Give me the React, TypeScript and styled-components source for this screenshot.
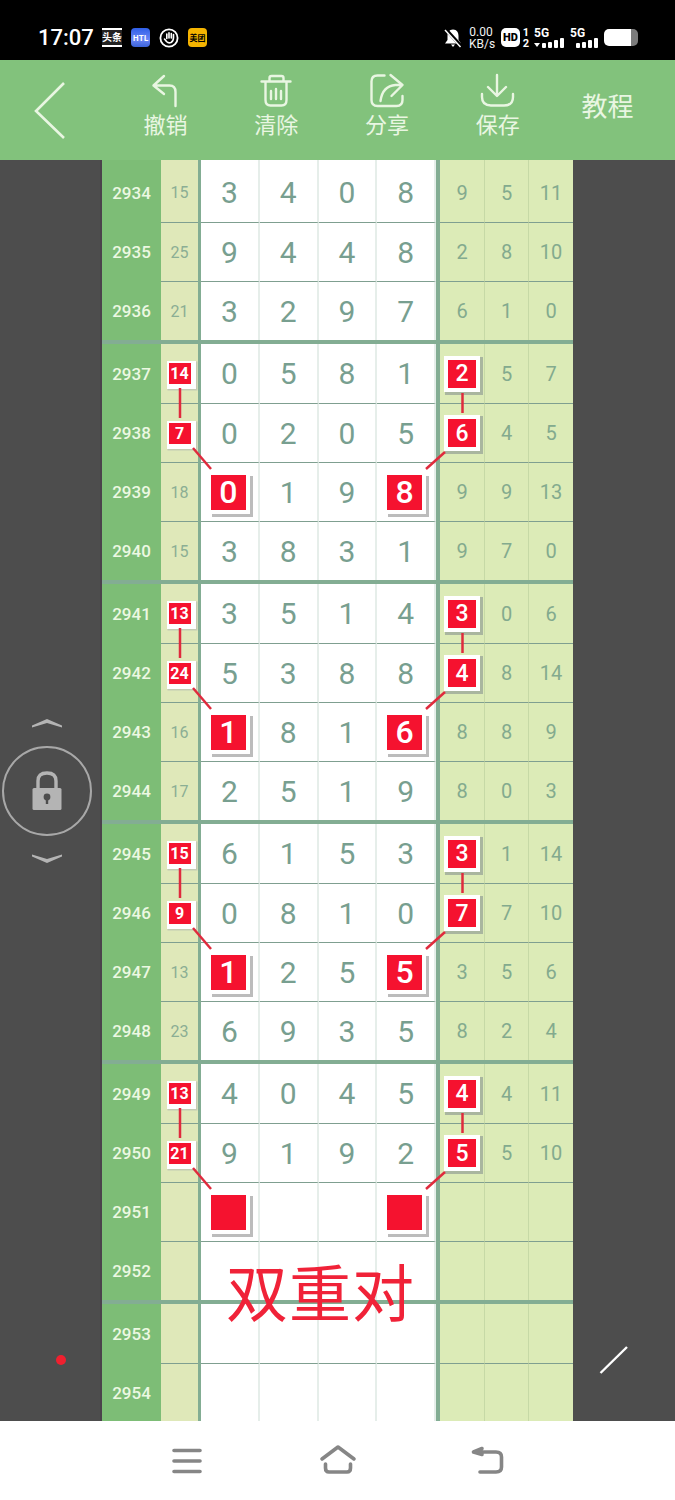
import React from 'react';
import styled, { createGlobalStyle, css } from 'styled-components';
import { Fragment } from 'react';

const Global = createGlobalStyle`
  html, body {
    margin: 0;
    padding: 0;
    background: #fff;
    font-family: Roboto, "Noto Sans CJK SC", sans-serif;
  }
`;

const Page = styled.div`
  width: 675px;
  height: 1500px;
  display: flex;
  flex-direction: column;
  overflow: hidden;
`;

/* status bar */

const StatusBar = styled.div`
  height: 60px;
  background: #000;
  color: #fff;
  display: flex;
  align-items: center;
  justify-content: space-between;
  padding: 15px 37px 0 38px;
  box-sizing: border-box;
`;

const StatusGroup = styled.div`
  display: flex;
  align-items: center;
`;

const Clock = styled.span`
  font-size: 22px;
  font-weight: 500;
  margin-right: 9px;
  width: 55px;
  white-space: nowrap;
`;

const AppIcon = styled.div<{ $bg: string; $color?: string }>`
  width: 19px;
  height: 19px;
  margin-right: 9px;
  border-radius: 4px;
  background: ${p => p.$bg};
  color: ${p => p.$color || '#000'};
  font-family: "Noto Sans CJK SC", sans-serif;
  font-size: 8px;
  font-weight: 700;
  line-height: 19px;
  text-align: center;
  overflow: hidden;
  white-space: nowrap;
`;

const NewsIcon = styled(AppIcon)`
  width: 20px;
  border-radius: 0;
  border-top: 2px solid #fff;
  border-bottom: 2px solid #fff;
  box-sizing: border-box;
  font-size: 10px;
  line-height: 14px;
  background: #222;
  color: #fff;
`;

const Speed = styled.div`
  width: 24px;
  margin: 0 8px 0 7px;
  font-size: 12px;
  line-height: 12px;
  text-align: center;
  color: #f2f2f2;
  white-space: nowrap;
`;

const HdTag = styled.div`
  width: 19px;
  height: 19px;
  border-radius: 5px;
  background: #fff;
  color: #000;
  font-size: 11px;
  font-weight: 900;
  line-height: 19px;
  text-align: center;
`;

const SimStack = styled.div`
  width: 8px;
  margin: 0 4px 0 2px;
  font-size: 11px;
  font-weight: 700;
  line-height: 11px;
  text-align: center;
`;

const Network = styled.div<{ $w: number }>`
  width: ${p => p.$w}px;
  margin-right: 6px;
  display: flex;
  flex-direction: column;
`;

const NetworkLabel = styled.span`
  font-size: 12px;
  font-weight: 700;
  line-height: 10px;
`;

const Battery = styled.div`
  width: 34px;
  height: 17px;
  border-radius: 5px;
  background: linear-gradient(90deg, #fff 0 27px, #7b7b7b 27px);
`;

/* toolbar */

const Toolbar = styled.div`
  height: 100px;
  background: #82c27c;
  color: #e9f6e2;
  display: grid;
  grid-template-columns: 110px repeat(5, 110.8px);
  font-family: "Noto Sans CJK SC", sans-serif;
`;

const BackButton = styled.div`
  display: flex;
  align-items: center;
  padding-left: 30px;
`;

const ToolButton = styled.div`
  display: flex;
  flex-direction: column;
  align-items: center;
  padding-top: 12px;
  font-size: 22px;
  line-height: 26px;
`;

const TextButton = styled.div`
  display: flex;
  align-items: center;
  justify-content: center;
  padding-bottom: 12px;
  padding-right: 2px;
  font-size: 26px;
`;

const ToolIcon = styled.svg`
  width: 40px;
  height: 38px;
  fill: none;
  stroke: #e9f6e2;
  stroke-width: 2.4;
  stroke-linecap: round;
  stroke-linejoin: round;
`;

/* chart area */

const Stage = styled.div`
  flex: 1;
  display: flex;
  background: #4d4d4d;
  overflow: hidden;
  min-height: 0;
`;

const SidePanel = styled.div`
  position: relative;
  width: 102px;
  box-sizing: border-box;
  border-right: 2px solid #4b424b;
  padding-left: 2px;
  display: flex;
  flex-direction: column;
  justify-content: center;
`;

const LockColumn = styled.div`
  width: 90px;
  display: flex;
  flex-direction: column;
  align-items: center;
  gap: 18px;
`;

const Chevron = styled.svg`
  width: 30px;
  height: 9px;
  fill: #b4b4b4;
`;

const LockRing = styled.div`
  width: 90px;
  height: 90px;
  box-sizing: border-box;
  border: 2px solid #a8a8a8;
  border-radius: 50%;
  display: flex;
  align-items: center;
  justify-content: center;
`;

const RecordDot = styled.div`
  position: absolute;
  left: 56px;
  top: 1195px;
  width: 10px;
  height: 10px;
  border-radius: 50%;
  background: #f0202f;
`;

const RightPanel = styled.div`
  position: relative;
  flex: 1;
`;

const PenStroke = styled.svg`
  position: absolute;
  left: 25px;
  top: 1185px;
  width: 32px;
  height: 30px;
`;

const Table = styled.div`
  position: relative;
  width: 471px;
  flex-shrink: 0;
`;

const Group = styled.div`
  position: relative;
`;

const ThickRule = styled.div`
  height: 4px;
  background: #83ad93;
`;

const Row = styled.div<{ $lead?: boolean }>`
  display: grid;
  grid-template-columns: 59px 37px 3px repeat(4, 58.75px) 4px 45px 44px 44px;
  height: ${p => (p.$lead ? 62 : 59)}px;
  ${p => p.$lead && css`
    & > div { padding-top: 3px; }
  `}
`;

const baseCell = css<{ $line?: boolean }>`
  box-sizing: border-box;
  display: flex;
  align-items: center;
  justify-content: center;
  border-top: ${p => (p.$line ? '1px solid #7f9f90' : '0')};
`;

const IssueCell = styled.div`
  display: flex;
  align-items: center;
  justify-content: center;
  box-sizing: border-box;
  background: #7dbd76;
  color: #ecf8e2;
  font-size: 17px;
  font-weight: 500;
`;

const SumCell = styled.div<{ $line?: boolean }>`
  ${baseCell}
  background: #dfe8b9;
  color: #8bae94;
  font-size: 16px;
`;

const VBar = styled.div`
  background: #83ad93;
`;

const MainCell = styled.div<{ $line?: boolean }>`
  ${baseCell}
  background: #fff;
  color: #789f90;
  font-size: 30px;
  border-right: 2px solid #e6eeea;
`;

const MissCell = styled.div<{ $line?: boolean }>`
  ${baseCell}
  background: #dcebb7;
  color: #83aa8e;
  font-size: 20px;
  border-right: 1px solid #c6d9a6;
  &:last-child { border-right: 0; }
`;

const markSizes = {
  left: css`
    width: 22px;
    height: 21px;
    font-size: 16px;
    font-weight: 700;
    box-shadow: 1.5px 1.5px 0 3.5px #fff, 2.5px 2.5px 0 4px #c3ccb4;
  `,
  right: css`
    width: 28px;
    height: 28px;
    font-size: 23px;
    font-weight: 500;
    box-shadow: 0 0 0 4px #fff, 2px 2px 0 5px #a9b69f;
  `,
  main: css`
    width: 35px;
    height: 35px;
    margin-right: 2px;
    font-size: 32px;
    font-weight: 500;
    box-shadow: 2px 2px 0 2px #fff, 4px 4px 0 3px #bcbcbc;
  `,
};

const Mark = styled.div<{ $kind: keyof typeof markSizes }>`
  display: flex;
  align-items: center;
  justify-content: center;
  background: #f5122f;
  color: #fff;
  ${p => markSizes[p.$kind]}
`;

const Links = styled.svg`
  position: absolute;
  left: 0;
  top: 0;
  width: 471px;
  height: 236px;
  stroke: #df2b3d;
  stroke-width: 2.5;
  fill: none;
`;

const Stamp = styled.div`
  position: absolute;
  left: 124px;
  top: 1097px;
  font-family: "Noto Sans CJK SC", sans-serif;
  font-size: 62px;
  letter-spacing: 1px;
  line-height: 66px;
  color: #f02238;
  white-space: nowrap;
`;

/* nav bar */

const NavBar = styled.div`
  height: 79px;
  background: #fff;
  display: grid;
  grid-template-columns: repeat(3, 150.5px);
  padding-left: 112px;
  align-items: center;
  justify-items: center;
`;

const NavIcon = styled.svg`
  width: 40px;
  height: 40px;
  fill: none;
  stroke: #868686;
  stroke-width: 3.6;
  stroke-linecap: round;
  stroke-linejoin: round;
`;

/* data, a leading * means the number is circled in red */

type RowData = [string, string, string[], string[]];

const lead: RowData[] = [
  ['2934', '15', ['3', '4', '0', '8'], ['9', '5', '11']],
  ['2935', '25', ['9', '4', '4', '8'], ['2', '8', '10']],
  ['2936', '21', ['3', '2', '9', '7'], ['6', '1', '0']],
];

const groups: RowData[][] = [
  [
    ['2937', '*14', ['0', '5', '8', '1'], ['*2', '5', '7']],
    ['2938', '*7', ['0', '2', '0', '5'], ['*6', '4', '5']],
    ['2939', '18', ['*0', '1', '9', '*8'], ['9', '9', '13']],
    ['2940', '15', ['3', '8', '3', '1'], ['9', '7', '0']],
  ],
  [
    ['2941', '*13', ['3', '5', '1', '4'], ['*3', '0', '6']],
    ['2942', '*24', ['5', '3', '8', '8'], ['*4', '8', '14']],
    ['2943', '16', ['*1', '8', '1', '*6'], ['8', '8', '9']],
    ['2944', '17', ['2', '5', '1', '9'], ['8', '0', '3']],
  ],
  [
    ['2945', '*15', ['6', '1', '5', '3'], ['*3', '1', '14']],
    ['2946', '*9', ['0', '8', '1', '0'], ['*7', '7', '10']],
    ['2947', '13', ['*1', '2', '5', '*5'], ['3', '5', '6']],
    ['2948', '23', ['6', '9', '3', '5'], ['8', '2', '4']],
  ],
  [
    ['2949', '*13', ['4', '0', '4', '5'], ['*4', '4', '11']],
    ['2950', '*21', ['9', '1', '9', '2'], ['*5', '5', '10']],
    ['2951', '', ['*', '', '', '*'], ['', '', '']],
    ['2952', '', ['', '', '', ''], ['', '', '']],
  ],
];

const tail: RowData[] = [
  ['2953', '', ['', '', '', ''], ['', '', '']],
  ['2954', '', ['', '', '', ''], ['', '', '']],
];

const cellText = (value: string, kind: keyof typeof markSizes) =>
  value.startsWith('*') ? <Mark $kind={kind}>{value.slice(1)}</Mark> : value;

const DataRow = ({ data, line, isLead }: { data: RowData; line: boolean; isLead?: boolean }) => {
  const [no, sum, main, right] = data;
  return (
    <Row $lead={isLead}>
      <IssueCell>{no}</IssueCell>
      <SumCell $line={line}>{cellText(sum, 'left')}</SumCell>
      <VBar />
      {main.map((v, i) => (
        <MainCell key={i} $line={line}>{cellText(v, 'main')}</MainCell>
      ))}
      <VBar />
      {right.map((v, i) => (
        <MissCell key={i} $line={line}>{cellText(v, 'right')}</MissCell>
      ))}
    </Row>
  );
};

const GroupLinks = () => (
  <Links viewBox="0 0 471 236">
    <line x1="78" y1="44" x2="78" y2="74" />
    <line x1="91" y1="104" x2="109" y2="125" />
    <line x1="360.5" y1="49" x2="360.5" y2="69" />
    <line x1="343" y1="108" x2="324" y2="125" />
  </Links>
);

export default function App() {
  return (
    <Page>
      <Global />
      <StatusBar>
        <StatusGroup>
          <Clock>17:07</Clock>
          <NewsIcon $bg="#222">头条</NewsIcon>
          <AppIcon $bg="linear-gradient(180deg, #2f5fe8, #6a86f5 60%, #3a62d8)" $color="#fff">HTL</AppIcon>
          <svg width="20" height="20" viewBox="0 0 20 20" fill="none" stroke="#fff" style={{ marginRight: 9 }}>
            <circle cx="10" cy="10" r="8.6" strokeWidth="1.8" />
            <path d="M5.5 11 L7.5 13.5 Q9.5 15.5 12 14.5 Q14.5 13 14.5 9.5 L14.5 6.5 M12.3 10 L12.3 5.5 M10 10 L10 4.8 M7.8 10.5 L7.8 6" strokeWidth="1.6" strokeLinecap="round" />
          </svg>
          <AppIcon $bg="#f5b400">美团</AppIcon>
        </StatusGroup>
        <StatusGroup>
          <svg width="18" height="20" viewBox="0 0 18 20">
            <path d="M9 1.5 C5 1.5 3.5 4.5 3.5 8 L3.5 12 L1 15.5 L17 15.5 L14.5 12 L14.5 8 C14.5 4.5 13 1.5 9 1.5 Z M7 16.5 L11 16.5 L9 19 Z" fill="#fff" />
            <path d="M1.5 1 L17 18" stroke="#000" strokeWidth="3.4" />
            <path d="M1 2 L16.5 19" stroke="#fff" strokeWidth="1.5" />
          </svg>
          <Speed>0.00<br />KB/s</Speed>
          <HdTag>HD</HdTag>
          <SimStack>1<br />2</SimStack>
          <Network $w={30}>
            <NetworkLabel>5G</NetworkLabel>
            <svg width="30" height="10" viewBox="0 0 30 10" fill="#fff">
              <path d="M0 5 L6 5 L3 9 Z" />
              <rect x="8" y="5" width="4" height="5" rx="1" />
              <rect x="14" y="4" width="4" height="6" rx="1" />
              <rect x="20" y="2" width="4" height="8" rx="1" />
              <rect x="26" y="0" width="4" height="10" rx="1" />
            </svg>
          </Network>
          <Network $w={28}>
            <NetworkLabel>5G</NetworkLabel>
            <svg width="28" height="10" viewBox="0 0 28 10" fill="#fff">
              <rect x="6" y="5" width="4" height="5" rx="1" />
              <rect x="12" y="4" width="4" height="6" rx="1" />
              <rect x="18" y="2" width="4" height="8" rx="1" />
              <rect x="24" y="0" width="4" height="10" rx="1" />
            </svg>
          </Network>
          <Battery />
        </StatusGroup>
      </StatusBar>

      <Toolbar>
        <BackButton>
          <svg width="40" height="66" viewBox="30 76 40 66" fill="none" stroke="#e9f6e2" strokeWidth="2.6">
            <path d="M64 82 L36 110 L64 137" />
          </svg>
        </BackButton>
        <ToolButton>
          <ToolIcon viewBox="145.5 72 40 38">
            <path d="M164.5 76 L154 85.5 L164.5 94 M154 85.5 L170 85.5 Q176 85.5 176 92 L176 106" />
          </ToolIcon>
          撤销
        </ToolButton>
        <ToolButton>
          <ToolIcon viewBox="256.5 72 40 38">
            <path d="M262 81.5 L291 81.5 M270 81 L270 78 Q270 76 272 76 L282 76 Q284 76 284 78 L284 81 M266 82 L266 100 Q266 105.5 271 105.5 L282 105.5 Q287 105.5 287 100 L287 82 M271.5 91 L271.5 99 M276.5 89 L276.5 99 M281.5 91 L281.5 99" />
          </ToolIcon>
          清除
        </ToolButton>
        <ToolButton>
          <ToolIcon viewBox="367.5 72 40 38">
            <path d="M385 75.5 L378 75.5 Q372 75.5 372 81.5 L372 100 Q372 106 378 106 L397 106 Q403 106 403 100 L403 96" />
            <path d="M391 75 L403 85 L392 96 M402 85 L396 85 Q383 86 381 101" />
          </ToolIcon>
          分享
        </ToolButton>
        <ToolButton>
          <ToolIcon viewBox="478 72 40 38">
            <path d="M497 75 L497 95 M488 87 L497 96 L506 87 M482 94 L482 97 Q482 105.5 491 105.5 L504 105.5 Q513 105.5 513 97 L513 94" />
          </ToolIcon>
          保存
        </ToolButton>
        <TextButton>教程</TextButton>
      </Toolbar>

      <Stage>
        <SidePanel>
          <LockColumn>
            <Chevron viewBox="0 0 30 9">
              <path d="M0 6.5 L15 0 L30 6.5 L30 8.5 L15 4 L0 8.5 Z" />
            </Chevron>
            <LockRing>
              <svg width="30" height="40" viewBox="0 0 30 40">
                <path d="M6 18 L6 10 Q6 2 15 2 Q24 2 24 10 L24 18" fill="none" stroke="#b4b4b4" strokeWidth="3.4" />
                <rect x="0.5" y="17" width="29" height="22" rx="1.5" fill="#b4b4b4" />
                <circle cx="15" cy="26" r="3.4" fill="#4d4d4d" />
                <rect x="13.8" y="27" width="2.4" height="6" fill="#4d4d4d" />
              </svg>
            </LockRing>
            <Chevron viewBox="0 0 30 9">
              <path d="M0 2.5 L15 9 L30 2.5 L30 0.5 L15 5 L0 0.5 Z" />
            </Chevron>
          </LockColumn>
          <RecordDot />
        </SidePanel>

        <Table>
          <Group>
            {lead.map((row, i) => (
              <DataRow key={row[0]} data={row} line={i > 0} isLead={i === 0} />
            ))}
          </Group>
          {groups.map(rows => (
            <Fragment key={rows[0][0]}>
              <ThickRule />
              <Group>
                {rows.map((row, i) => (
                  <DataRow key={row[0]} data={row} line={i > 0} />
                ))}
                <GroupLinks />
              </Group>
            </Fragment>
          ))}
          <ThickRule />
          <Group>
            {tail.map((row, i) => (
              <DataRow key={row[0]} data={row} line={i > 0} />
            ))}
          </Group>
          <Stamp>双重对</Stamp>
        </Table>

        <RightPanel>
          <PenStroke viewBox="0 0 32 30">
            <line x1="2.5" y1="28" x2="29" y2="2" stroke="#fff" strokeWidth="2.4" />
          </PenStroke>
        </RightPanel>
      </Stage>

      <NavBar>
        <NavIcon viewBox="0 0 40 40">
          <path d="M7 9.5 L33 9.5 M7 20 L33 20 M7 30.5 L33 30.5" />
        </NavIcon>
        <NavIcon viewBox="0 0 40 40">
          <path d="M4 18 L20 6 L36 18 M7.5 23 L7.5 27 Q7.5 31 11 31 L29 31 Q32.5 31 32.5 27 L32.5 23" />
        </NavIcon>
        <NavIcon viewBox="0 0 40 40">
          <path d="M14 7.5 L5.5 11 L14 13.5 M6 11 L28 11 Q33.5 11 33.5 16 L33.5 26 Q33.5 31 28 31 L12 31" />
        </NavIcon>
      </NavBar>
    </Page>
  );
}
